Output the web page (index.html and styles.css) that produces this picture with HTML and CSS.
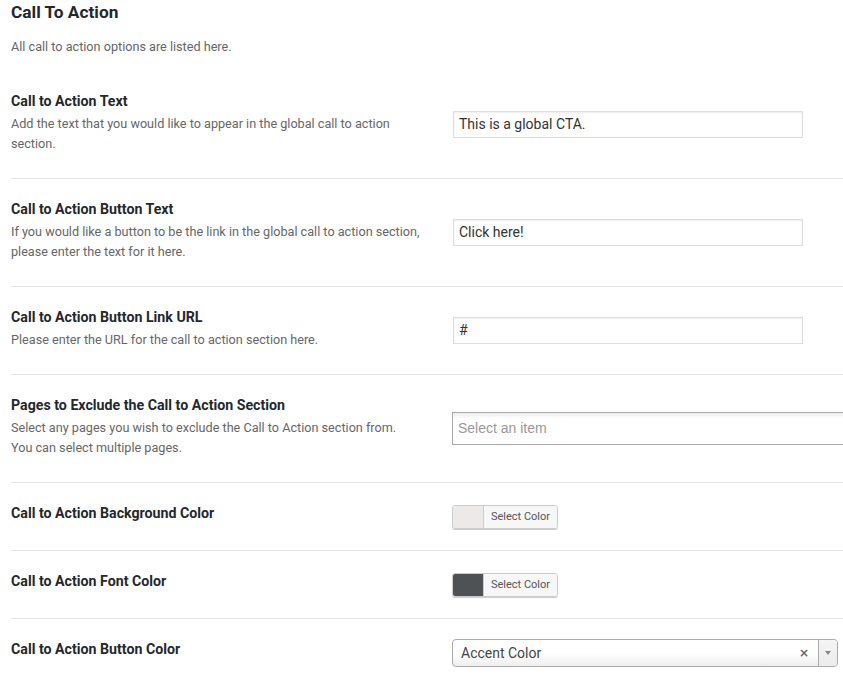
FILE: index.html
```html
<!DOCTYPE html>
<html lang="en">
<head>
<meta charset="utf-8">
<title>Call To Action</title>
<link rel="stylesheet" href="styles.css">
</head>
<body>
<div class="panel">
  <h2 class="panel-title">Call To Action</h2>
  <p class="panel-desc">All call to action options are listed here.</p>

  <div class="row">
    <div class="label">
      <div class="label-title">Call to Action Text</div>
      <div class="label-desc">Add the text that you would like to appear in the global call to action section.</div>
    </div>
    <div class="field">
      <div class="text-input">This is a global CTA.</div>
    </div>
  </div>

  <div class="row">
    <div class="label">
      <div class="label-title">Call to Action Button Text</div>
      <div class="label-desc">If you would like a button to be the link in the global call to action section, please enter the text for it here.</div>
    </div>
    <div class="field">
      <div class="text-input">Click here!</div>
    </div>
  </div>

  <div class="row">
    <div class="label">
      <div class="label-title">Call to Action Button Link URL</div>
      <div class="label-desc">Please enter the URL for the call to action section here.</div>
    </div>
    <div class="field">
      <div class="text-input">#</div>
    </div>
  </div>

  <div class="row">
    <div class="label">
      <div class="label-title">Pages to Exclude the Call to Action Section</div>
      <div class="label-desc">Select any pages you wish to exclude the Call to Action section from.<br>You can select multiple pages.</div>
    </div>
    <div class="field">
      <div class="multi-select">Select an item</div>
    </div>
  </div>

  <div class="row">
    <div class="label">
      <div class="label-title">Call to Action Background Color</div>
    </div>
    <div class="field">
      <div class="color-result">
        <span class="swatch swatch-light"></span>
        <span class="color-btn">Select Color</span>
      </div>
    </div>
  </div>

  <div class="row">
    <div class="label">
      <div class="label-title">Call to Action Font Color</div>
    </div>
    <div class="field">
      <div class="color-result">
        <span class="swatch swatch-dark"></span>
        <span class="color-btn">Select Color</span>
      </div>
    </div>
  </div>

  <div class="row">
    <div class="label">
      <div class="label-title">Call to Action Button Color</div>
    </div>
    <div class="field">
      <div class="single-select">
        <span class="single-value">Accent Color</span>
        <span class="single-clear">&#215;</span>
        <span class="single-arrow"><span class="arrow-tri"></span></span>
      </div>
    </div>
  </div>
</div>
</body>
</html>
```

FILE: styles.css
```css
html, body {
  margin: 0;
  padding: 0;
  background: #fff;
  overflow: hidden;
}

body {
  font-family: Roboto, "Noto Sans", Arial, sans-serif;
  color: #23282d;
}

.panel {
  width: 1000px;
  padding-left: 11px;
}

.panel-title {
  margin: 0;
  font-size: 17.3px;
  line-height: 24px;
  font-weight: 700;
  color: #23282d;
}

.panel-desc {
  margin: 13px 0 14px;
  font-size: 12.65px;
  line-height: 20px;
  color: #666;
}

.row {
  display: grid;
  grid-template-columns: 430px 1fr;
  column-gap: 11px;
  border-bottom: 1px solid #e6e6e6;
}

.label {
  padding: 20px 19px 24px 0;
}

.label-title {
  font-size: 14.2px;
  line-height: 20px;
  font-weight: 700;
  color: #23282d;
  margin-bottom: 3px;
}

.label-desc {
  font-size: 12.65px;
  line-height: 20px;
  color: #666;
}

.field {
  align-self: center;
  display: flex;
}

.text-input {
  box-sizing: border-box;
  width: 350px;
  height: 27px;
  margin-left: 1px;
  padding: 0 5px;
  border: 1px solid #ddd;
  box-shadow: inset 0 1px 2px rgba(0, 0, 0, 0.07);
  font-size: 14px;
  line-height: 25px;
  color: #333;
}

.multi-select {
  box-sizing: border-box;
  flex: 1;
  height: 33px;
  padding: 0 5px;
  border: 1px solid #aaa;
  background-image: linear-gradient(to bottom, #eee 1%, #fff 18%);
  font-family: "Liberation Sans", Arial, sans-serif;
  font-size: 14px;
  line-height: 31px;
  color: #999;
}

.color-result {
  box-sizing: border-box;
  display: flex;
  height: 24px;
  border: 1px solid #ccc;
  border-radius: 3px;
  box-shadow: 0 1px 0 #ccc;
  overflow: hidden;
}

.swatch {
  width: 30px;
  height: 22px;
}

.swatch-light {
  background: #ebeae8;
}

.swatch-dark {
  background: #4e5254;
}

.color-btn {
  box-sizing: border-box;
  width: 74px;
  height: 22px;
  border-left: 1px solid #ccc;
  background: #f7f7f7;
  font-size: 11px;
  line-height: 22px;
  color: #555;
  text-align: center;
}

.single-select {
  box-sizing: border-box;
  display: flex;
  align-items: center;
  width: 386px;
  height: 28px;
  border: 1px solid #aaa;
  border-radius: 4px;
  background-image: linear-gradient(to top, #eee 0%, #fff 50%);
  overflow: hidden;
}

.single-value {
  flex: 1;
  padding-left: 8px;
  font-size: 14px;
  line-height: 26px;
  color: #444;
}

.single-clear {
  width: 12px;
  margin-right: 8px;
  font-family: "DejaVu Sans", sans-serif;
  font-size: 12px;
  font-weight: 700;
  line-height: 26px;
  color: #666;
  text-align: center;
}

.single-arrow {
  box-sizing: border-box;
  display: flex;
  align-items: center;
  justify-content: center;
  width: 19px;
  height: 26px;
  border-left: 1px solid #aaa;
  background: linear-gradient(to bottom, #f4f4f4, #ececec);
}

.arrow-tri {
  width: 0;
  height: 0;
  border-left: 3px solid transparent;
  border-right: 3px solid transparent;
  border-top: 4px solid #888;
}
```
